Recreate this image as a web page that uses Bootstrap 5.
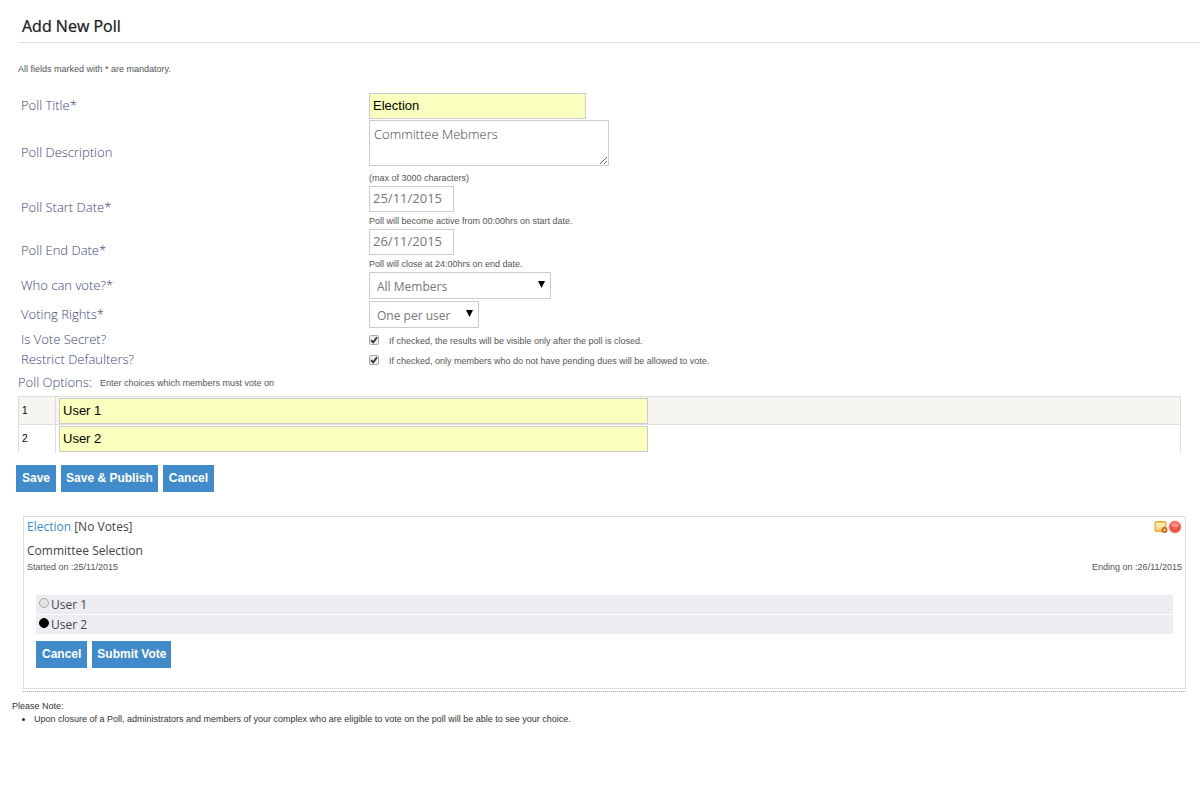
<!DOCTYPE html>
<html lang="en">
<head>
<meta charset="utf-8">
<meta name="viewport" content="width=device-width, initial-scale=1">
<title>Add New Poll</title>
<link href="https://cdn.jsdelivr.net/npm/bootstrap@5.3.0/dist/css/bootstrap.min.css" rel="stylesheet">
<style>
  body { font: 300 13px/20px "Open Sans", sans-serif; color: #333; background: #fff; }
  .page-head { margin-left: 18px; padding: 15px 4px 4px; border-bottom: 1px solid #ddd; }
  .page-head h1 { font-size: 16px; line-height: 23px; font-weight: 500; color: #222; margin: 0; text-shadow: 0 0 1px #888; }
  .hint { font: 9px/12px "Liberation Sans", Arial, sans-serif; color: #555; margin: 0; }
  .mandatory { padding: 20px 18px 18px; }
  .poll-form { padding: 0 19px 0 21px; }
  .form-line { display: flex; align-items: center; }
  .line-label { width: 30%; color: #3c4678; line-height: 18px; padding-bottom: 2px; }
  .line-field { width: 70%; }
  .line-pad { padding-bottom: 2px; }
  .line-top { padding-bottom: 1px; }
  .line-field .hint { padding-top: 3px; padding-bottom: 2px; }
  .line-field .hint-wide { padding-top: 6px; }
  .box { border: 1px solid #ccc; border-radius: 0; box-shadow: none; color: #777; padding: 0 3px; height: 26px; display: block; font-size: 13px; line-height: 18px; background-color: #fff; }
  .box-filled { background-color: #faffbd; color: #000; font-family: "Liberation Sans", Arial, sans-serif; padding-bottom: 2px; }
  .box-title { width: 217px; }
  .box-area { width: 240px; height: 46px; padding: 4px; resize: both; font-weight: 300; color: #444; }
  .box-date { width: 85px; padding-bottom: 2px; }
  .box-option { width: 589px; max-width: 100%; }
  .drop { position: relative; width: max-content; }
  .drop select { appearance: none; height: 27px; padding: 2px 7px 0; font-size: 12px; }
  .drop svg { position: absolute; right: 6px; top: 9px; pointer-events: none; }
  .drop-wide { width: 182px; }
  .drop-small { width: 110px; }
  .tick { appearance: none; width: 10px; height: 10px; margin: 0 10px 0 0; border: 1px solid #aaa; border-radius: 2px; background: #eee url("data:image/svg+xml,%3Csvg xmlns='http://www.w3.org/2000/svg' viewBox='0 0 8 8'%3E%3Cpath d='M1 4.2L3.2 6.4L7 1.2' fill='none' stroke='%23333' stroke-width='1.8'/%3E%3C/svg%3E") center/8px no-repeat; }
  .options-head { padding: 2px 18px 4px; color: #3c4678; }
  .options-head .hint { padding-top: 2px; }
  .options-wrap { padding: 0 19px 0 18px; }
  .options { width: 100%; border: 1px solid #ddd; border-bottom: 0; border-collapse: collapse; }
  .options td { padding: 1px 3px 0; border: 1px solid #ddd; border-width: 1px 0 0; height: 28px; }
  .options td:first-child { width: 37px; border-right-width: 1px; font: 10px/12px "Liberation Sans", Arial, sans-serif; color: #000; }
  .options tr:first-child { background: #f6f5f1; }
  .act { background: #428bca; color: #fff; border: 0; border-radius: 0; font: bold 12px/15px "Liberation Sans", Arial, sans-serif; padding: 6px; }
  .act-long { padding: 6px 5px; }
  .actions { padding: 12px 16px 0; }
  .gap-act { gap: 5px; }
  .poll-card { margin: 24px 14px 0 23px; border: 1px solid #ddd; padding: 0 3px 20px; }
  .poll-card .head-line { height: 20px; }
  .card-text { font-size: 12px; font-weight: 400; color: #444; }
  .poll-card a { color: #428bca; text-decoration: none; }
  .choices { padding: 22px 9px 0; }
  .choice { display: flex; align-items: center; background: #ecedf3; height: 19px; margin-bottom: 1px; padding-left: 3px; }
  .choice label { line-height: 20px; padding-left: 2px; padding-top: 1px; }
  .choice input { appearance: none; width: 10px; height: 10px; margin: 0 0 2px; border: 1px solid #aaa; border-radius: 50%; background: #e4e4e4; }
  .choice input:checked { background: #000; border-color: #000; }
  .vote-actions { padding-top: 6px; }
  .dots { margin: 2px 14px 0 23px; border-top: 1px dotted #aaa; }
  .notes { padding: 8px 12px; color: #333; }
  .notes ul { padding-left: 22px; margin: 1px 0 0; }
</style>
</head>
<body>
<header class="page-head"><h1>Add New Poll</h1></header>
<main>
  <p class="hint mandatory">All fields marked with * are mandatory.</p>
  <form>
    <div class="poll-form">
      <div class="form-line line-top">
        <label class="line-label" for="title">Poll Title*</label>
        <div class="line-field"><input id="title" class="box box-filled box-title" type="text" value="Election"></div>
      </div>
      <div class="form-line">
        <label class="line-label" for="description">Poll Description</label>
        <div class="line-field"><textarea id="description" class="box box-area">Committee Mebmers</textarea><p class="hint hint-wide">(max of 3000 characters)</p></div>
      </div>
      <div class="form-line">
        <label class="line-label" for="start">Poll Start Date*</label>
        <div class="line-field"><input id="start" class="box box-date" type="text" value="25/11/2015"><p class="hint">Poll will become active from 00:00hrs on start date.</p></div>
      </div>
      <div class="form-line">
        <label class="line-label" for="end">Poll End Date*</label>
        <div class="line-field"><input id="end" class="box box-date" type="text" value="26/11/2015"><p class="hint">Poll will close at 24:00hrs on end date.</p></div>
      </div>
      <div class="form-line line-pad">
        <label class="line-label" for="who">Who can vote?*</label>
        <div class="line-field"><div class="drop"><select id="who" class="box drop-wide"><option>All Members</option></select><svg width="7" height="7" viewBox="0 0 7 7"><path d="M0 0H7L3.5 7Z"/></svg></div></div>
      </div>
      <div class="form-line line-pad">
        <label class="line-label" for="rights">Voting Rights*</label>
        <div class="line-field"><div class="drop"><select id="rights" class="box drop-small"><option>One per user</option></select><svg width="7" height="7" viewBox="0 0 7 7"><path d="M0 0H7L3.5 7Z"/></svg></div></div>
      </div>
      <div class="form-line">
        <label class="line-label" for="secret">Is Vote Secret?</label>
        <div class="line-field d-flex align-items-center"><input id="secret" class="tick" type="checkbox" checked><span class="hint">If checked, the results will be visible only after the poll is closed.</span></div>
      </div>
      <div class="form-line">
        <label class="line-label" for="restrict">Restrict Defaulters?</label>
        <div class="line-field d-flex align-items-center"><input id="restrict" class="tick" type="checkbox" checked><span class="hint">If checked, only members who do not have pending dues will be allowed to vote.</span></div>
      </div>
    </div>
    <div class="options-head d-flex align-items-center gap-2"><span>Poll Options:</span><span class="hint">Enter choices which members must vote on</span></div>
    <div class="options-wrap">
      <table class="options">
        <tr><td>1</td><td><input class="box box-filled box-option" type="text" aria-label="Option 1" value="User 1"></td></tr>
        <tr><td>2</td><td><input class="box box-filled box-option" type="text" aria-label="Option 2" value="User 2"></td></tr>
      </table>
    </div>
    <div class="actions gap-act d-flex">
      <button type="button" class="act">Save</button>
      <button type="button" class="act act-long">Save &amp; Publish</button>
      <button type="button" class="act">Cancel</button>
    </div>
  </form>

  <section class="poll-card">
    <div class="head-line d-flex justify-content-between align-items-center">
      <span class="card-text"><a href="#">Election</a> [No Votes]</span>
      <span class="d-flex">
        <svg width="14" height="14" viewBox="0 0 14 14"><rect x="1" y="1.500" width="11" height="10" rx="1" fill="#f6c55c" stroke="#e9ad45"/><path d="M2 3H11V6L7 7H2Z" fill="#fde9ae"/><path d="M2 8H9" stroke="#fff3cf"/><circle cx="10.500" cy="10" r="3" fill="#c96a22"/><circle cx="10.500" cy="10" r="1.200" fill="#fbd9a0"/></svg>
        <svg width="14" height="14" viewBox="0 0 14 14"><circle cx="7" cy="7" r="6" fill="#ee4f45" stroke="#f39a90"/><ellipse cx="7" cy="5" rx="4" ry="2.500" fill="#f88d80"/><path d="M4 9H10" stroke="#f36e63"/></svg>
      </span>
    </div>
    <div class="card-text pt-1">Committee Selection</div>
    <div class="hint d-flex justify-content-between"><span>Started on :25/11/2015</span><span>Ending on :26/11/2015</span></div>
    <form class="choices">
      <div class="choice"><input id="user1" type="radio" name="vote"><label class="card-text" for="user1">User 1</label></div>
      <div class="choice"><input id="user2" type="radio" name="vote" checked><label class="card-text" for="user2">User 2</label></div>
      <div class="vote-actions gap-act d-flex"><button type="button" class="act">Cancel</button><button type="button" class="act act-long">Submit Vote</button></div>
    </form>
  </section>
  <div class="dots"></div>
  <footer class="notes hint">Please Note:
    <ul><li>Upon closure of a Poll, administrators and members of your complex who are eligible to vote on the poll will be able to see your choice.</li></ul>
  </footer>
</main>
<script src="https://cdn.jsdelivr.net/npm/bootstrap@5.3.0/dist/js/bootstrap.bundle.min.js"></script>
</body>
</html>
